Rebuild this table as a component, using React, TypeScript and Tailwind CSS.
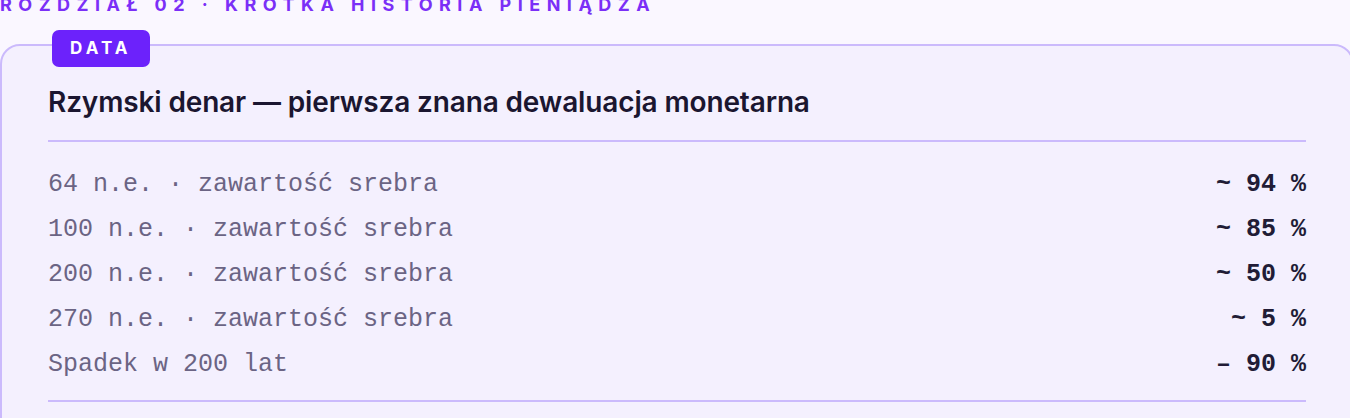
const ROWS = [
  { label: "64 n.e. · zawartość srebra", value: "~ 94 %" },
  { label: "100 n.e. · zawartość srebra", value: "~ 85 %" },
  { label: "200 n.e. · zawartość srebra", value: "~ 50 %" },
  { label: "270 n.e. · zawartość srebra", value: "~ 5 %" },
  { label: "Spadek w 200 lat", value: "– 90 %" },
]

function Row({ label, value }: { label: string, value: string }) {
  return <div className="flex justify-between items-center h-[45px] font-['Liberation_Mono',monospace] text-[25px]">
    <span className="text-[#6b6484]">{label}</span>
    <span className="text-[#211c36] font-bold">{value}</span>
  </div>
}

export default function App() {
  return (
    <div className="h-[418px] overflow-hidden bg-[#faf7ff] font-['Inter',sans-serif]">
      <div className="-mt-[5px] h-[20px] leading-[20px] text-[18px] font-bold tracking-[0.36em] text-[#7b2ff7] whitespace-nowrap">
        ROZDZIAŁ 02 · KRÓTKA HISTORIA PIENIĄDZA
      </div>

      <div className="relative mt-[29px] w-[1354px] rounded-[20px] border-2 border-[#cbbafc] bg-[#f4f0fe] px-[46px] pt-[38px]">
        <div className="absolute -top-[16px] left-[50px] h-[37px] px-[18px] flex items-center rounded-[7px] bg-[#6c22fb] text-white text-[17px] font-bold tracking-[0.24em]">
          DATA
        </div>

        <h2 className="text-[28px] leading-[36px] font-semibold text-[#1b1630] tracking-[-0.005em] pb-[20px] border-b-2 border-[#cbbafc]">
          Rzymski denar — pierwsza znana dewaluacja monetarna
        </h2>

        <div className="pt-[20px] pb-[13px] border-b-2 border-[#cbbafc]">
          {ROWS.map(r => <Row key={r.label} label={r.label} value={r.value} />)}
        </div>
        <div className="h-[40px]" />
      </div>
    </div>
  )
}
